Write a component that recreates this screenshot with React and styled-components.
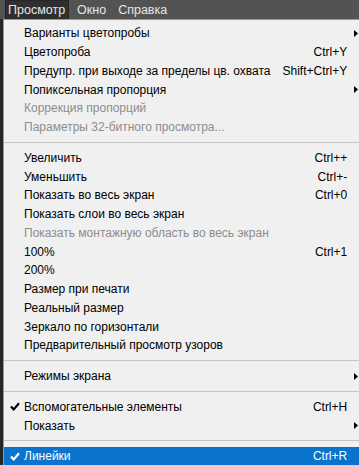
import React from "react";
import styled, { createGlobalStyle } from "styled-components";

//Menu data
const groups = [
	[
		{ label: "Варианты цветопробы", sub: true },
		{ label: "Цветопроба", key: "Ctrl+Y" },
		{ label: "Предупр. при выходе за пределы цв. охвата", key: "Shift+Ctrl+Y" },
		{ label: "Попиксельная пропорция", sub: true },
		{ label: "Коррекция пропорций", disabled: true },
		{ label: "Параметры 32-битного просмотра...", disabled: true },
	],
	[
		{ label: "Увеличить", key: "Ctrl++" },
		{ label: "Уменьшить", key: "Ctrl+-" },
		{ label: "Показать во весь экран", key: "Ctrl+0" },
		{ label: "Показать слои во весь экран" },
		{ label: "Показать монтажную область во весь экран", disabled: true },
		{ label: "100%", key: "Ctrl+1" },
		{ label: "200%" },
		{ label: "Размер при печати" },
		{ label: "Реальный размер" },
		{ label: "Зеркало по горизонтали" },
		{ label: "Предварительный просмотр узоров" },
	],
	[{ label: "Режимы экрана", sub: true }],
	[
		{ label: "Вспомогательные элементы", key: "Ctrl+H", checked: true },
		{ label: "Показать", sub: true },
	],
	[{ label: "Линейки", key: "Ctrl+R", checked: true, active: true }],
];

const Check = () => (
	<svg width="10" height="9" viewBox="0 0 10 9">
		<path d="M1 4.4 L3.7 7.4 L9 1.2" fill="none" stroke="currentColor" strokeWidth="2.2" />
	</svg>
);

const Arrow = () => (
	<svg width="4" height="7" viewBox="0 0 4 7">
		<path d="M0 0 L4 3.5 L0 7 Z" fill="#000" />
	</svg>
);

export default function App() {
	return (
		<>
			<GlobalStyle />
			<Screen>
				<MenuBar>
					<TopItem open>Просмотр</TopItem>
					<TopItem>Окно</TopItem>
					<TopItem>Справка</TopItem>
				</MenuBar>
				<Body>
					<Canvas />
					<Dropdown>
						{groups.map((group, gi) => (
							<React.Fragment key={gi}>
								{gi > 0 && <Separator />}
								{group.map((item) => (
									<Row key={item.label} $active={item.active} $disabled={item.disabled}>
										<Mark>{item.checked && <Check />}</Mark>
										<Label>{item.label}</Label>
										<Shortcut>{item.key}</Shortcut>
										<SubArrow>{item.sub && <Arrow />}</SubArrow>
									</Row>
								))}
							</React.Fragment>
						))}
					</Dropdown>
				</Body>
			</Screen>
		</>
	);
}

//Style
const GlobalStyle = createGlobalStyle`
	body {
		margin: 0;
		background: #2a2a2a;
		font-family: "Liberation Sans", Arial, sans-serif;
	}
`;

const Screen = styled.div`
	width: 359px;
	height: 465px;
	overflow: hidden;
	display: flex;
	flex-direction: column;
	background: #2a2a2a;
`;

const MenuBar = styled.div`
	height: 19px;
	background: #535353;
	display: flex;
	padding-left: 5px;
	flex-shrink: 0;
`;

const TopItem = styled.div`
	height: 18px;
	padding: 0 3px 0 2px;
	margin-right: 5px;
	font-size: 12.5px;
	line-height: 18px;
	color: #e6e6e6;
	background: ${(p) => (p.open ? "#2f2f2f" : "transparent")};
	border: 1px solid ${(p) => (p.open ? "#262626" : "transparent")};
	border-bottom: none;
`;

const Body = styled.div`
	flex: 1;
	display: flex;
`;

const Canvas = styled.div`
	width: 3px;
	background: #262626;
	flex-shrink: 0;
`;

const Dropdown = styled.div`
	flex: 1;
	background: #f0f0f0;
	border-left: 1px solid #979797;
	border-top: 1px solid #979797;
	padding-top: 4px;
	display: flex;
	flex-direction: column;
`;

const Row = styled.div`
	height: 18.75px;
	flex-shrink: 0;
	display: flex;
	align-items: center;
	font-size: 12px;
	color: ${(p) => (p.$active ? "#fff" : p.$disabled ? "#8d8d8d" : "#000")};
	background: ${(p) => (p.$active ? "#0a73cc" : "transparent")};
`;

const Mark = styled.div`
	width: 19px;
	display: flex;
	justify-content: center;
	padding-left: 1px;
`;

const Label = styled.div`
	flex: 1;
	white-space: nowrap;
	padding-right: 12px;
`;

const Shortcut = styled.div`
	white-space: nowrap;
	text-align: right;
`;

const SubArrow = styled.div`
	width: 19px;
	flex-shrink: 0;
	display: flex;
	justify-content: flex-start;
	padding-left: 7px;
	box-sizing: border-box;
`;

const Separator = styled.div`
	height: 1px;
	flex-shrink: 0;
	background: #c4c4c4;
	margin: 5px 0 6px;
`;
